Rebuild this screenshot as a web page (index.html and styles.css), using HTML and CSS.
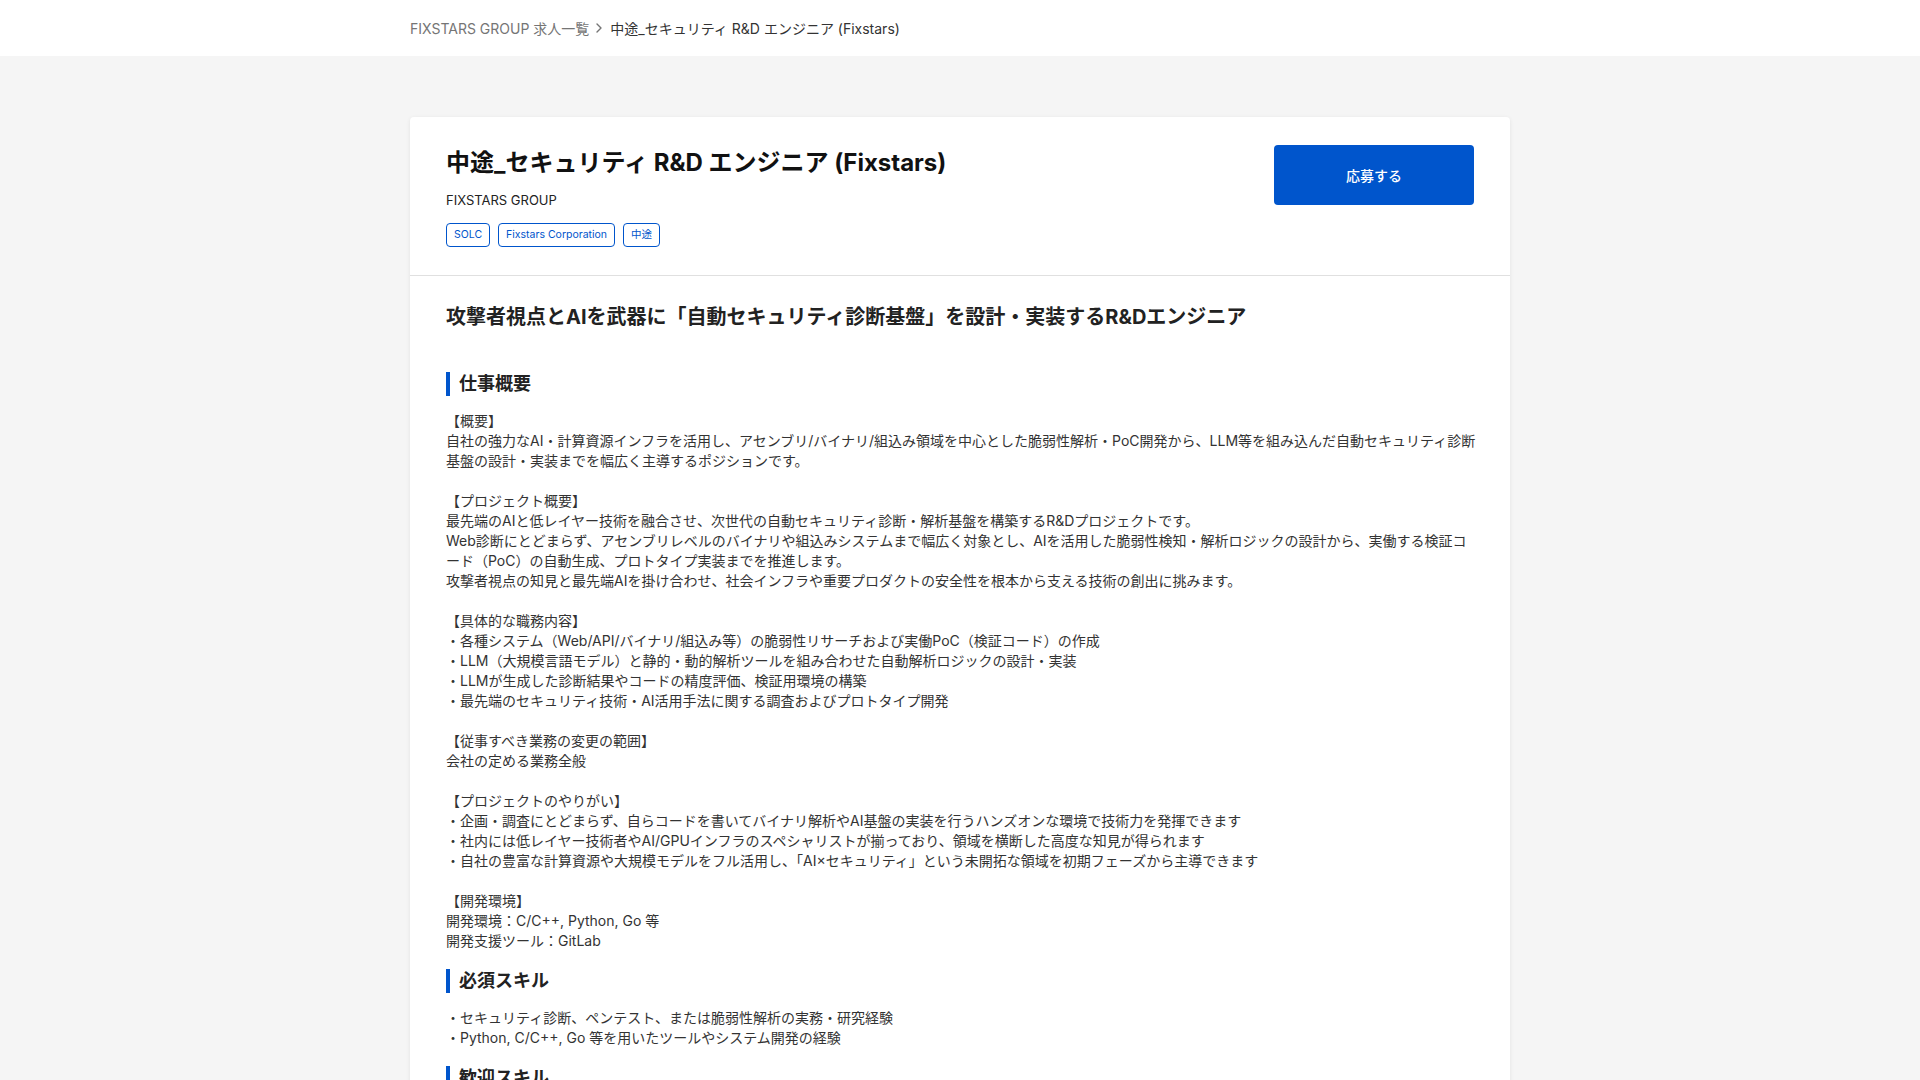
FILE: index.html
```html
<!DOCTYPE html>
<html lang="ja">
<head>
  <meta charset="UTF-8" />
  <meta name="viewport" content="width=device-width, initial-scale=1.0"/>
  <title>中途_セキュリティ R&amp;D エンジニア (Fixstars) | FIXSTARS GROUP</title>
  <link rel="stylesheet" href="styles.css">
</head>
<body>
  <header class="topbar">
    <nav class="breadcrumb">
      <a href="#" class="crumb-link">FIXSTARS GROUP 求人一覧</a>
      <svg class="crumb-sep" width="6" height="10" viewBox="0 0 6 10"><path d="M1 1l4 4-4 4" fill="none" stroke="#757575" stroke-width="1.4" stroke-linecap="round" stroke-linejoin="round"/></svg>
      <span class="crumb-current">中途_セキュリティ R&amp;D エンジニア (Fixstars)</span>
    </nav>
  </header>

  <main class="page">
    <article class="job">
      <div class="job-head">
        <div class="job-info">
          <h1 class="job-title">中途_セキュリティ R&amp;D エンジニア (Fixstars)</h1>
          <div class="job-company">FIXSTARS GROUP</div>
          <ul class="tags">
            <li class="tag">SOLC</li>
            <li class="tag">Fixstars Corporation</li>
            <li class="tag">中途</li>
          </ul>
        </div>
        <a href="#" class="apply-btn">応募する</a>
      </div>

      <div class="job-body">
        <h2 class="job-lead">攻撃者視点とAIを武器に「自動セキュリティ診断基盤」を設計・実装するR&amp;Dエンジニア</h2>

        <h3 class="section-title">仕事概要</h3>
        <div class="section-text">【概要】
自社の強力なAI・計算資源インフラを活用し、アセンブリ/バイナリ/組込み領域を中心とした脆弱性解析・PoC開発から、LLM等を組み込んだ自動セキュリティ診断基盤の設計・実装までを幅広く主導するポジションです。

【プロジェクト概要】
最先端のAIと低レイヤー技術を融合させ、次世代の自動セキュリティ診断・解析基盤を構築するR&amp;Dプロジェクトです。
Web診断にとどまらず、アセンブリレベルのバイナリや組込みシステムまで幅広く対象とし、AIを活用した脆弱性検知・解析ロジックの設計から、実働する検証コード（PoC）の自動生成、プロトタイプ実装までを推進します。
攻撃者視点の知見と最先端AIを掛け合わせ、社会インフラや重要プロダクトの安全性を根本から支える技術の創出に挑みます。

【具体的な職務内容】
・各種システム（Web/API/バイナリ/組込み等）の脆弱性リサーチおよび実働PoC（検証コード）の作成
・LLM（大規模言語モデル）と静的・動的解析ツールを組み合わせた自動解析ロジックの設計・実装
・LLMが生成した診断結果やコードの精度評価、検証用環境の構築
・最先端のセキュリティ技術・AI活用手法に関する調査およびプロトタイプ開発

【従事すべき業務の変更の範囲】
会社の定める業務全般

【プロジェクトのやりがい】
・企画・調査にとどまらず、自らコードを書いてバイナリ解析やAI基盤の実装を行うハンズオンな環境で技術力を発揮できます
・社内には低レイヤー技術者やAI/GPUインフラのスペシャリストが揃っており、領域を横断した高度な知見が得られます
・自社の豊富な計算資源や大規模モデルをフル活用し、「AI×セキュリティ」という未開拓な領域を初期フェーズから主導できます

【開発環境】
開発環境：C/C++, Python, Go 等
開発支援ツール：GitLab</div>

        <h3 class="section-title">必須スキル</h3>
        <div class="section-text">・セキュリティ診断、ペンテスト、または脆弱性解析の実務・研究経験
・Python, C/C++, Go 等を用いたツールやシステム開発の経験</div>

        <h3 class="section-title">歓迎スキル</h3>
        <div class="section-text">・リバースエンジニアリング、ファジング等の低レイヤー解析の経験
・LLMを活用したアプリケーションやツールの開発経験</div>
      </div>
    </article>
  </main>
</body>
</html>
```

FILE: styles.css
```css
body {
  margin: 0;
  font-family: "Inter", "Noto Sans CJK JP", sans-serif;
  background-color: #f5f5f5;
  color: #333;
}
.topbar {
  background: #fff;
  height: 56px;
}
.breadcrumb {
  width: 1100px;
  margin: 0 auto;
  height: 56px;
  display: flex;
  align-items: center;
  font-size: 14px;
}
.crumb-link {
  color: #757575;
  text-decoration: none;
}
.crumb-sep {
  margin: 0 8px 0 7px;
}
.crumb-current {
  color: #333;
}
.page {
  width: 1100px;
  margin: 0 auto;
  padding: 61px 0 60px;
}
.job {
  background: #fff;
  border-radius: 4px;
  box-shadow: 0 1px 4px rgba(0, 0, 0, 0.08);
}
.job-head {
  display: flex;
  justify-content: space-between;
  align-items: flex-start;
  padding: 28px 36px 28px;
  border-bottom: 1px solid #e0e0e0;
}
.job-title {
  margin: 1px 0 0;
  font-size: 24px;
  line-height: 34px;
  font-weight: 700;
  color: #111;
}
.job-company {
  margin-top: 11px;
  font-size: 13px;
  line-height: 18px;
  color: #222;
}
.tags {
  list-style: none;
  margin: 14px 0 0;
  padding: 0;
  display: flex;
  gap: 8px;
}
.tag {
  height: 22px;
  line-height: 22px;
  padding: 0 7px;
  font-size: 10.5px;
  color: #0055cc;
  border: 1px solid #0055cc;
  border-radius: 4px;
}
.apply-btn {
  width: 200px;
  height: 60px;
  display: flex;
  align-items: center;
  justify-content: center;
  background: #0055cc;
  color: #fff;
  font-size: 14px;
  font-weight: 500;
  border-radius: 4px;
  text-decoration: none;
}
.job-body {
  padding: 27px 33px 40px 36px;
}
.job-lead {
  margin: 0 0 41px;
  font-size: 20px;
  line-height: 28px;
  font-weight: 700;
  color: #222;
}
.section-title {
  margin: 18px 0 15px;
  padding-left: 9px;
  border-left: 4px solid #0055cc;
  font-size: 18px;
  line-height: 24px;
  font-weight: 700;
  color: #222;
}
.section-text {
  white-space: pre-wrap;
  font-size: 14px;
  line-height: 20px;
  color: #333;
}
```
